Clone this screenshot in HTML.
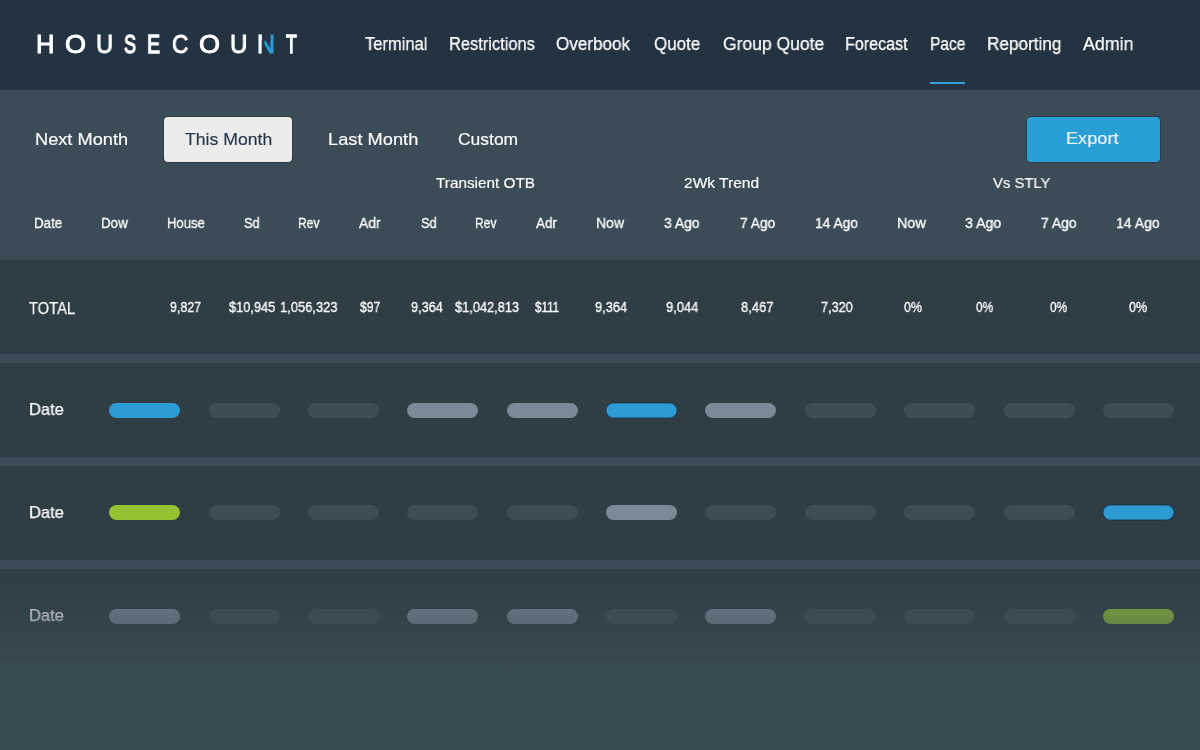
<!DOCTYPE html>
<html lang="en">
<head>
<meta charset="utf-8">
<title>Housecount - Pace</title>
<style>
*{box-sizing:border-box;margin:0;padding:0}
html,body{width:1200px;height:750px;overflow:hidden;background:#3c4c56;font-family:"Liberation Sans",sans-serif;color:#fff}
body{position:relative}
.t{will-change:transform;position:absolute;display:block;height:24px;line-height:24px;white-space:nowrap;transform-origin:0 50%;color:#fff}
.hdr{position:absolute;left:0;top:0;width:1200px;height:90px;background:#243342}
.logo .t{-webkit-text-stroke:.95px #fff}
.logo .n{color:#2aa0db;-webkit-text-stroke:.95px #2aa0db;clip-path:polygon(0 0,28% 0,28% 100%,41% 100%,41% 36%,74% 36%,74% 0,100% 0,100% 100%,0 100%)}
.logo .n::before{content:"N";position:absolute;left:0;top:0;color:#fff;-webkit-text-stroke:.95px #fff;clip-path:inset(0 71% 0 0)}
.nav .ul{position:absolute;left:930px;top:82px;width:35px;height:2px;background:#389fd6}
.btn{position:absolute;top:116.7px;height:45.4px;border-radius:4px;box-shadow:0 0 0 1px rgba(20,30,40,.38)}
.btn.sel{left:164px;width:128px;background:#ececec}
.btn.exp{left:1027px;width:133.3px;background:#2a9fd6}
.t.dk{color:#25374a}
.t.ex{color:#eaf3f9}
.band{position:absolute;left:0;width:1200px;height:94px;background:#2f3d45}
.p{position:absolute;top:39.8px;width:71.2px;height:15.1px;border-radius:8px;background:#3e4d55}
.p.b{background:#2d9bd4}.p.g{background:#7b8a96}.p.gr{background:#95c133}
.p.o{box-shadow:0 0 0 .5px rgba(22,40,58,.7),inset 0 0 0 .5px rgba(22,40,58,.7)}
.fade{position:absolute;left:0;top:566px;width:1200px;height:184px;background:linear-gradient(to bottom,rgba(57,75,83,0) 0,rgba(57,75,83,1) 114px)}
.nav .t{-webkit-text-stroke:.25px #fff}
.ch .t,.tv .t{-webkit-text-stroke:.3px #fff}
.lbl .t{-webkit-text-stroke:.25px #fff}
.gh .t,.tb .t{-webkit-text-stroke:.15px #fff}
.tb .t.dk{-webkit-text-stroke:.15px #25374a}
.tb .t.ex{-webkit-text-stroke:.15px #eaf3f9}
.logo .t.w{-webkit-text-stroke:1.3px #fff}
</style>
</head>
<body>
<div class="hdr"></div>
<div class="logo" aria-label="HOUSECOUNT"><span class="t" style="left:36.25px;top:32.21px;font-size:25.5px;transform:scaleX(0.9873)">H</span><span class="t" style="left:65.01px;top:32.21px;font-size:25.5px;transform:scaleX(1.0589)">O</span><span class="t" style="left:96.04px;top:32.21px;font-size:25.5px;transform:scaleX(0.9287)">U</span><span class="t w" style="left:124.29px;top:32.21px;font-size:25.5px;transform:scaleX(0.7100)">S</span><span class="t w" style="left:147.06px;top:32.21px;font-size:25.5px;transform:scaleX(0.7714)">E</span><span class="t" style="left:172.08px;top:32.21px;font-size:25.5px;transform:scaleX(0.8859)">C</span><span class="t" style="left:199.16px;top:32.21px;font-size:25.5px;transform:scaleX(1.0589)">O</span><span class="t" style="left:230.13px;top:32.21px;font-size:25.5px;transform:scaleX(0.9444)">U</span><span class="t n" style="left:256.53px;top:32.21px;font-size:25.5px;transform:scaleX(0.9707)">N</span><span class="t w" style="left:286.20px;top:32.21px;font-size:25.5px;transform:scaleX(0.6967)">T</span></div>
<div class="nav">
<span class="t" style="left:364.50px;top:31.76px;font-size:18px;transform:scaleX(0.9176)">Terminal</span>
<span class="t" style="left:448.59px;top:31.76px;font-size:18px;transform:scaleX(0.9137)">Restrictions</span>
<span class="t" style="left:556.25px;top:31.76px;font-size:18px;transform:scaleX(0.9489)">Overbook</span>
<span class="t" style="left:653.75px;top:31.76px;font-size:18px;transform:scaleX(0.9434)">Quote</span>
<span class="t" style="left:722.50px;top:31.76px;font-size:18px;transform:scaleX(0.9731)">Group Quote</span>
<span class="t" style="left:845.36px;top:31.76px;font-size:18px;transform:scaleX(0.8946)">Forecast</span>
<span class="t" style="left:929.64px;top:31.76px;font-size:18px;transform:scaleX(0.8621)">Pace</span>
<span class="t" style="left:986.55px;top:31.76px;font-size:18px;transform:scaleX(0.9535)">Reporting</span>
<span class="t" style="left:1083.00px;top:31.76px;font-size:18px;transform:scaleX(0.9898)">Admin</span>
<div class="ul"></div>
</div>
<div class="btn sel"></div>
<div class="btn exp"></div>
<div class="tb">
<span class="t" style="left:34.93px;top:128.11px;font-size:17px;transform:scaleX(1.0705)">Next Month</span>
<span class="t dk" style="left:184.50px;top:128.11px;font-size:17px;transform:scaleX(1.0373)">This Month</span>
<span class="t" style="left:327.68px;top:128.11px;font-size:17px;transform:scaleX(1.0738)">Last Month</span>
<span class="t" style="left:457.50px;top:128.11px;font-size:17px;transform:scaleX(1.0272)">Custom</span>
<span class="t ex" style="left:1066.43px;top:126.51px;font-size:17px;transform:scaleX(1.0680)">Export</span>
</div>
<div class="gh">
<span class="t" style="left:436.00px;top:171.10px;font-size:15px;transform:scaleX(1.0210)">Transient OTB</span>
<span class="t" style="left:684.00px;top:171.10px;font-size:15px;transform:scaleX(1.0352)">2Wk Trend</span>
<span class="t" style="left:993.30px;top:171.10px;font-size:15px;transform:scaleX(0.9885)">Vs STLY</span>
</div>
<div class="ch">
<span class="t" style="left:34.11px;top:211.10px;font-size:15px;transform:scaleX(0.8898)">Date</span>
<span class="t" style="left:100.81px;top:211.10px;font-size:15px;transform:scaleX(0.8912)">Dow</span>
<span class="t" style="left:166.83px;top:211.10px;font-size:15px;transform:scaleX(0.8711)">House</span>
<span class="t" style="left:244.00px;top:211.10px;font-size:15px;transform:scaleX(0.8498)">Sd</span>
<span class="t" style="left:298.20px;top:211.10px;font-size:15px;transform:scaleX(0.8023)">Rev</span>
<span class="t" style="left:359.00px;top:211.10px;font-size:15px;transform:scaleX(0.9294)">Adr</span>
<span class="t" style="left:420.70px;top:211.10px;font-size:15px;transform:scaleX(0.8498)">Sd</span>
<span class="t" style="left:474.90px;top:211.10px;font-size:15px;transform:scaleX(0.8023)">Rev</span>
<span class="t" style="left:535.70px;top:211.10px;font-size:15px;transform:scaleX(0.8995)">Adr</span>
<span class="t" style="left:595.76px;top:211.10px;font-size:15px;transform:scaleX(0.9357)">Now</span>
<span class="t" style="left:664.00px;top:211.10px;font-size:15px;transform:scaleX(0.9265)">3 Ago</span>
<span class="t" style="left:740.00px;top:211.10px;font-size:15px;transform:scaleX(0.9188)">7 Ago</span>
<span class="t" style="left:814.78px;top:211.10px;font-size:15px;transform:scaleX(0.9221)">14 Ago</span>
<span class="t" style="left:896.74px;top:211.10px;font-size:15px;transform:scaleX(0.9597)">Now</span>
<span class="t" style="left:965.00px;top:211.10px;font-size:15px;transform:scaleX(0.9445)">3 Ago</span>
<span class="t" style="left:1040.70px;top:211.10px;font-size:15px;transform:scaleX(0.9265)">7 Ago</span>
<span class="t" style="left:1115.76px;top:211.10px;font-size:15px;transform:scaleX(0.9372)">14 Ago</span>
</div>
<div class="band" style="top:260px"></div>
<div class="band" style="top:363px"><i class="p b" style="left:108.8px"></i><i class="p" style="left:208.7px"></i><i class="p" style="left:307.9px"></i><i class="p g" style="left:406.8px"></i><i class="p g" style="left:506.7px"></i><i class="p b o" style="left:605.8px"></i><i class="p g" style="left:705px"></i><i class="p" style="left:805px"></i><i class="p" style="left:903.9px"></i><i class="p" style="left:1003.7px"></i><i class="p" style="left:1103px"></i></div>
<div class="band" style="top:466px"><i class="p gr" style="left:108.8px;top:38.8px"></i><i class="p" style="left:208.7px;top:38.8px"></i><i class="p" style="left:307.9px;top:38.8px"></i><i class="p" style="left:406.8px;top:38.8px"></i><i class="p" style="left:506.7px;top:38.8px"></i><i class="p g" style="left:605.8px;top:38.8px"></i><i class="p" style="left:705px;top:38.8px"></i><i class="p" style="left:805px;top:38.8px"></i><i class="p" style="left:903.9px;top:38.8px"></i><i class="p" style="left:1003.7px;top:38.8px"></i><i class="p b o" style="left:1103px;top:38.8px"></i></div>
<div class="band" style="top:569px"><i class="p g" style="left:108.8px"></i><i class="p" style="left:208.7px"></i><i class="p" style="left:307.9px"></i><i class="p g" style="left:406.8px"></i><i class="p g" style="left:506.7px"></i><i class="p" style="left:605.8px"></i><i class="p g" style="left:705px"></i><i class="p" style="left:805px"></i><i class="p" style="left:903.9px"></i><i class="p" style="left:1003.7px"></i><i class="p gr" style="left:1103px"></i></div>
<div class="tv">
<span class="t" style="left:169.50px;top:294.55px;font-size:14px;transform:scaleX(0.8866)">9,827</span>
<span class="t" style="left:228.50px;top:294.55px;font-size:14px;transform:scaleX(0.9150)">$10,945</span>
<span class="t" style="left:280.33px;top:294.55px;font-size:14px;transform:scaleX(0.9228)">1,056,323</span>
<span class="t" style="left:359.50px;top:294.55px;font-size:14px;transform:scaleX(0.8697)">$97</span>
<span class="t" style="left:410.50px;top:294.55px;font-size:14px;transform:scaleX(0.9079)">9,364</span>
<span class="t" style="left:454.50px;top:294.55px;font-size:14px;transform:scaleX(0.9142)">$1,042,813</span>
<span class="t" style="left:534.50px;top:294.55px;font-size:14px;transform:scaleX(0.8282)">$111</span>
<span class="t" style="left:594.50px;top:294.55px;font-size:14px;transform:scaleX(0.9149)">9,364</span>
<span class="t" style="left:665.75px;top:294.55px;font-size:14px;transform:scaleX(0.9220)">9,044</span>
<span class="t" style="left:741.25px;top:294.55px;font-size:14px;transform:scaleX(0.9263)">8,467</span>
<span class="t" style="left:821.10px;top:294.55px;font-size:14px;transform:scaleX(0.9050)">7,320</span>
<span class="t" style="left:903.60px;top:294.55px;font-size:14px;transform:scaleX(0.8895)">0%</span>
<span class="t" style="left:975.60px;top:294.55px;font-size:14px;transform:scaleX(0.8541)">0%</span>
<span class="t" style="left:1049.50px;top:294.55px;font-size:14px;transform:scaleX(0.8491)">0%</span>
<span class="t" style="left:1129.30px;top:294.55px;font-size:14px;transform:scaleX(0.8946)">0%</span>
</div>
<div class="lbl">
<span class="t" style="left:29.00px;top:296.91px;font-size:17px;transform:scaleX(0.8662)">TOTAL</span>
<span class="t" style="left:29.03px;top:397.91px;font-size:17px;transform:scaleX(0.9694)">Date</span>
<span class="t" style="left:29.03px;top:500.71px;font-size:17px;transform:scaleX(0.9694)">Date</span>
<span class="t" style="left:29.03px;top:603.71px;font-size:17px;transform:scaleX(0.9694)">Date</span>
</div>
<div class="fade"></div>
</body>
</html>
